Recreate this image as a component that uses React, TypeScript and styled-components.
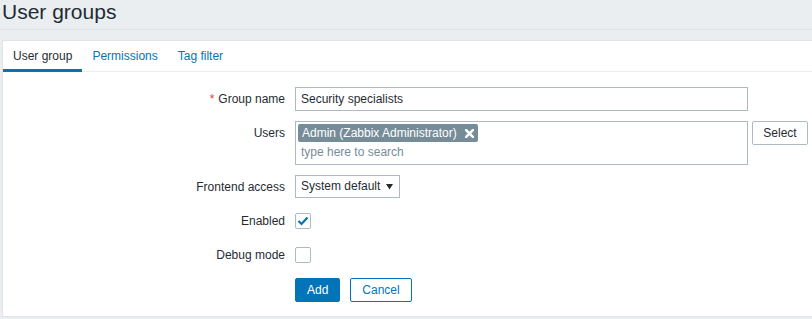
import React from "react";
import styled, { createGlobalStyle } from "styled-components";

const GlobalStyle = createGlobalStyle`
  html, body {
    margin: 0;
    padding: 0;
    background: #ebeef0;
    overflow: hidden;
  }
  body {
    font-family: "Liberation Sans", Arial, sans-serif;
    font-size: 12px;
    color: #1f2c33;
  }
  * { box-sizing: border-box; }
`;

const Page = styled.div`
  width: 832px;
  padding-left: 2px;
`;

const Header = styled.header`
  padding: 0 0 5px 2px;
  border-bottom: 1px solid #dde3e6;
  margin-left: -2px;
`;

const Title = styled.h1`
  margin: 0;
  font-size: 21px;
  line-height: 24px;
  font-weight: normal;
  color: #1f2c33;
`;

const Card = styled.section`
  margin-top: 10px;
  background: #fff;
  border: 1px solid #dfe4e7;
`;

const TabNav = styled.nav`
  display: flex;
  border-bottom: 1px solid #ebeef0;
`;

const Tab = styled.a<{ $active?: boolean }>`
  display: block;
  padding: 8px 10px 6px;
  line-height: 14px;
  margin-bottom: -1px;
  border-bottom: 3px solid ${(p) => (p.$active ? "#0275b8" : "transparent")};
  color: ${(p) => (p.$active ? "#1f2c33" : "#0275b8")};
  text-decoration: none;
  cursor: pointer;
`;

const Form = styled.form`
  display: grid;
  grid-template-columns: 282px auto;
  column-gap: 10px;
  row-gap: 10px;
  padding: 15px 0 14px;
`;

const Label = styled.label<{ $required?: boolean }>`
  justify-self: end;
  align-self: start;
  line-height: 24px;
  white-space: nowrap;
  &::before {
    content: ${(p) => (p.$required ? "'*'" : "none")};
    color: #e33734;
    margin-right: 4px;
  }
`;

const Field = styled.div`
  display: flex;
  align-items: flex-start;
  min-height: 24px;
`;

const CheckField = styled(Field)`
  align-items: center;
  height: 24px;
`;

const TextInput = styled.input`
  width: 453px;
  height: 24px;
  border: 1px solid #acbbc2;
  padding: 0 5px;
  font-family: inherit;
  font-size: 12px;
  color: #1f2c33;
  background: #fff;
  outline: none;
`;

const MultiSelect = styled.div`
  width: 453px;
  height: 44px;
  border: 1px solid #acbbc2;
  padding: 2px;
  display: flex;
  flex-direction: column;
  align-items: flex-start;
`;

const TagChip = styled.span`
  display: inline-flex;
  align-items: center;
  height: 18px;
  padding: 0 4px;
  gap: 8px;
  background: #768d99;
  color: #fff;
  border-radius: 2px;
  line-height: 18px;
`;

const SearchInput = styled.input`
  border: none;
  outline: none;
  height: 22px;
  padding: 0 3px;
  font-family: inherit;
  font-size: 12px;
  width: 100%;
  background: transparent;
  &::placeholder {
    color: #768d99;
  }
`;

const Button = styled.button<{ $variant?: "primary" | "alt" | "grey" }>`
  height: 24px;
  padding: 0 11px;
  border-radius: 2px;
  font-family: inherit;
  font-size: 12px;
  line-height: 22px;
  cursor: pointer;
  border: 1px solid
    ${(p) => (p.$variant === "grey" ? "#acbbc2" : "#0275b8")};
  background: ${(p) => (p.$variant === "primary" ? "#0275b8" : "#fff")};
  color: ${(p) =>
    p.$variant === "primary" ? "#fff" : p.$variant === "alt" ? "#0275b8" : "#1f2c33"};
`;

const SelectBtn = styled(Button)`
  margin-left: 4px;
  width: 56px;
  padding: 0;
`;

const Dropdown = styled.div`
  width: 105px;
  height: 23px;
  border: 1px solid #acbbc2;
  padding: 0 6px 0 5px;
  display: flex;
  align-items: center;
  justify-content: space-between;
  background: #fff;
  line-height: 21px;
`;

const Checkbox = styled.span`
  width: 16px;
  height: 16px;
  border: 1px solid #acbbc2;
  border-radius: 2px;
  display: inline-flex;
  align-items: center;
  justify-content: center;
  background: #fff;
`;

const ButtonRow = styled.div`
  grid-column: 2;
  display: flex;
  gap: 10px;
  margin-top: 1px;
`;

const RemoveIcon = () => (
  <svg width="9" height="9" viewBox="0 0 9 9">
    <path d="M1.2 1.2 L7.8 7.8 M7.8 1.2 L1.2 7.8" stroke="#fff" strokeWidth="2.6" strokeLinecap="square" />
  </svg>
);

const ArrowDown = () => (
  <svg width="7" height="7" viewBox="0 0 7 7">
    <path d="M0 1 H7 L3.5 6.5 Z" fill="#1f2c33" />
  </svg>
);

const CheckMark = () => (
  <svg width="12" height="10" viewBox="0 0 12 10">
    <path d="M1.5 5 L4.5 8 L10.5 1.5" stroke="#0275b8" strokeWidth="2.2" fill="none" />
  </svg>
);

export default function App() {
  return (
    <Page>
      <GlobalStyle />
      <Header>
        <Title>User groups</Title>
      </Header>
      <Card>
        <TabNav>
          <Tab $active>User group</Tab>
          <Tab>Permissions</Tab>
          <Tab>Tag filter</Tab>
        </TabNav>
        <Form onSubmit={(e) => e.preventDefault()}>
          <Label $required>Group name</Label>
          <Field>
            <TextInput defaultValue="Security specialists" />
          </Field>

          <Label>Users</Label>
          <Field>
            <MultiSelect>
              <TagChip>
                Admin (Zabbix Administrator)
                <RemoveIcon />
              </TagChip>
              <SearchInput placeholder="type here to search" />
            </MultiSelect>
            <SelectBtn type="button" $variant="grey">Select</SelectBtn>
          </Field>

          <Label>Frontend access</Label>
          <Field>
            <Dropdown>
              <span>System default</span>
              <ArrowDown />
            </Dropdown>
          </Field>

          <Label>Enabled</Label>
          <CheckField>
            <Checkbox>
              <CheckMark />
            </Checkbox>
          </CheckField>

          <Label>Debug mode</Label>
          <CheckField>
            <Checkbox />
          </CheckField>

          <ButtonRow>
            <Button type="submit" $variant="primary">Add</Button>
            <Button type="button" $variant="alt">Cancel</Button>
          </ButtonRow>
        </Form>
      </Card>
    </Page>
  );
}
